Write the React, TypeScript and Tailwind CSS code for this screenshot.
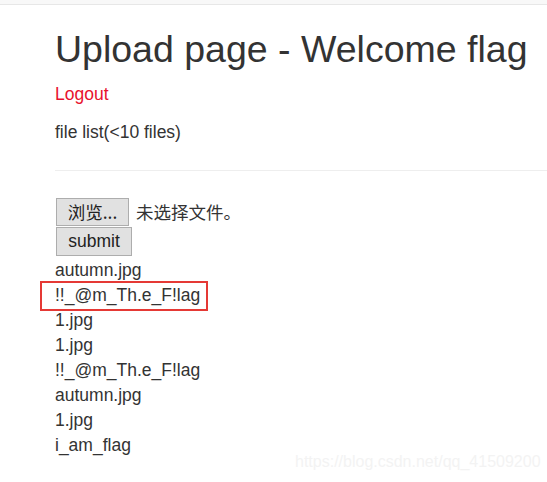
import React from 'react';

const files = ['autumn.jpg', '!!_@m_Th.e_F!lag', '1.jpg', '1.jpg', '!!_@m_Th.e_F!lag', 'autumn.jpg', '1.jpg', 'i_am_flag'];

export default function App() {
  return (
    <div className="relative h-[482px] w-[547px] overflow-hidden bg-white text-[#333] font-['Liberation_Sans',Arial,'Noto_Sans_CJK_SC',sans-serif]">
      {/* navbar edge */}
      <div className="h-[5px] bg-[#f8f8f8] border-b border-[#e7e7e7]" />

      <div className="pl-[55px]">
        <h1 className="mt-[24px] text-[37.5px] leading-[41px] font-normal">Upload page - Welcome flag</h1>
        <a href="#" className="mt-[12px] block text-[17.5px] leading-[25px] text-[#e8112d]">Logout</a>
        <p className="mt-[13px] text-[17.5px] leading-[25px]">file list(&lt;10 files)</p>
        <hr className="mt-[25px] border-0 border-t border-[#eeeeee]" />

        <form className="mt-[27px] text-[17.5px]">
          <div className="flex h-[28px] items-center gap-[7px]">
            <button
              type="button"
              className="ml-px h-[28px] w-[73px] border border-[#adadad] bg-[#e1e1e1] text-[17.5px] leading-none text-[#222] font-['Noto_Sans_CJK_SC',sans-serif]"
            >
              浏览...
            </button>
            <span className="font-['Noto_Sans_CJK_SC',sans-serif] text-[17.5px] leading-none">未选择文件。</span>
          </div>
          <button
            type="submit"
            className="ml-px mt-px block h-[29px] w-[76px] border border-[#adadad] bg-[#e1e1e1] text-[17.5px] leading-none text-[#222]"
          >
            submit
          </button>
        </form>

        <ul className="mt-[2px] text-[17.5px] leading-[25px]">
          {files.map((f, i) => (
            <li key={i}>{f}</li>
          ))}
        </ul>
      </div>

      {/* annotation box */}
      <div className="absolute left-[40px] top-[281px] h-[30px] w-[168px] border-2 border-[#e53935]" />

      {/* watermark */}
      <div className="absolute left-[295px] top-[452px] text-[16px] leading-[20px] text-[#f3f3f3]">
        https://blog.csdn.net/qq_41509200
      </div>
    </div>
  );
}
